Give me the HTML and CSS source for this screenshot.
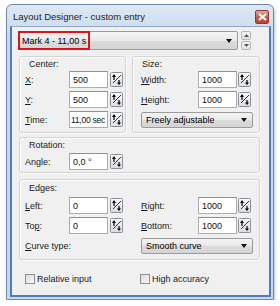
FILE: index.html
```html
<!DOCTYPE html>
<html lang="en">
<head>
    <meta charset="UTF-8">
    <title>Layout Designer - custom entry</title>
    <link rel="stylesheet" href="styles.css">
</head>
<body>
    <div class="window">
        <div class="titlebar">
            <span class="title">Layout Designer - custom entry</span>
            <button class="close">
                <svg width="9" height="8" viewBox="0 0 9 8"><path d="M1 1 L8 7 M8 1 L1 7" stroke="#fff" stroke-width="2"/></svg>
            </button>
        </div>
        <div class="client">
            <div class="toprow">
                <div class="combo entry">
                    <span class="combo-text">Mark 4 - 11,00 s</span>
                    <span class="highlight"></span>
                    <span class="arrow"></span>
                </div>
                <div class="updown">
                    <span class="ud-btn"><svg width="5" height="3" viewBox="0 0 5 3"><path d="M0 3 L2.5 0 L5 3Z" fill="#555"/></svg></span>
                    <span class="ud-btn"><svg width="5" height="3" viewBox="0 0 5 3"><path d="M0 0 L2.5 3 L5 0Z" fill="#555"/></svg></span>
                </div>
            </div>

            <div class="pair">
                <div class="group center">
                    <div class="group-title">Center:</div>
                    <div class="fields left-fields">
                        <label><u>X</u>:</label><input class="field" value="500"><span class="spin"></span>
                        <label><u>Y</u>:</label><input class="field" value="500"><span class="spin"></span>
                        <label><u>T</u>ime:</label><input class="field tight" value="11,00 sec"><span class="spin"></span>
                    </div>
                </div>
                <div class="group size">
                    <div class="group-title">Size:</div>
                    <div class="fields right-fields">
                        <label><u>W</u>idth:</label><input class="field" value="1000"><span class="spin"></span>
                        <label><u>H</u>eight:</label><input class="field" value="1000"><span class="spin"></span>
                        <div class="combo wide"><span class="combo-text">Freely adjustable</span><span class="arrow"></span></div>
                    </div>
                </div>
            </div>

            <div class="group rotation">
                <div class="group-title">Rotation:</div>
                <div class="fields left-fields">
                    <label>Angle:</label><input class="field" value="0,0 °"><span class="spin"></span>
                </div>
            </div>

            <div class="group edges">
                <div class="group-title">Edges:</div>
                <div class="halves">
                    <div class="fields left-fields">
                        <label><u>L</u>eft:</label><input class="field" value="0"><span class="spin"></span>
                        <label>To<u>p</u>:</label><input class="field" value="0"><span class="spin"></span>
                        <label class="span-3"><u>C</u>urve type:</label>
                    </div>
                    <div class="fields right-fields">
                        <label><u>R</u>ight:</label><input class="field" value="1000"><span class="spin"></span>
                        <label><u>B</u>ottom:</label><input class="field" value="1000"><span class="spin"></span>
                        <div class="combo wide"><span class="combo-text">Smooth curve</span><span class="arrow"></span></div>
                    </div>
                </div>
            </div>

            <div class="checks">
                <label class="check"><span class="box"></span>Relative input</label>
                <label class="check"><span class="box"></span>High accuracy</label>
            </div>
        </div>
    </div>

    <script>
        // same spin icon for every numeric field
        const spinIcon = '<svg width="13" height="15" viewBox="0 0 13 15">' +
            '<defs><linearGradient id="g" x1="0" y1="0" x2="0" y2="1"><stop offset="0" stop-color="#fbfbfb"/><stop offset="1" stop-color="#dcdcdc"/></linearGradient></defs>' +
            '<rect x="0.5" y="0.5" width="12" height="14" rx="1" fill="url(#g)" stroke="#8a9099"/>' +
            '<path d="M3 11 L11 3" stroke="#333" stroke-width="1"/>' +
            '<path d="M4 3 V8" stroke="#000" stroke-width="1.2"/><path d="M2 5 L4 2 L6 5Z" fill="#000"/>' +
            '<path d="M9 8 V12" stroke="#000" stroke-width="1.2"/><path d="M7 10.5 L9 13 L11 10.5Z" fill="#000"/>' +
            '</svg>';
        document.querySelectorAll('.spin').forEach(el => el.innerHTML = spinIcon);
    </script>
</body>
</html>
```

FILE: styles.css
```css
* {
    box-sizing: border-box;
    margin: 0;
    padding: 0;
}

body {
    background: #fff;
    font-family: "Liberation Sans", Arial, sans-serif;
    font-size: 9px;
    color: #000;
    padding: 4px 0 0 6px;
}

.window {
    width: 268px;
    height: 296px;
    border: 1px solid #6f8aa8;
    border-radius: 6px 6px 0 0;
    background: linear-gradient(#dde8f5, #c9daee 30px, #c6d8ee);
    display: flex;
    flex-direction: column;
    box-shadow: 1px 2px 3px rgba(0,0,0,0.25);
}

.titlebar {
    height: 21px;
    display: flex;
    align-items: center;
    justify-content: space-between;
    padding: 0 4px 0 6px;
}

.title {
    font-size: 9.5px;
    color: #1e1e1e;
    padding-top: 1px;
}

.close {
    width: 14px;
    height: 14px;
    border: 1px solid #8c3b30;
    border-radius: 2px;
    background: linear-gradient(#e7a597, #c9614f 50%, #b7412f);
    display: flex;
    align-items: center;
    justify-content: center;
    margin-top: 3px;
}

.client {
    flex: 1;
    margin: 0 2px 2px 3px;
    border: 2px solid #4d7dbb;
    border-top: 1px solid #8fa7c4;
    background: #f0f0f0;
    padding: 4px 9px 0 7px;
}

.toprow {
    display: flex;
    align-items: center;
    gap: 3px;
    margin-left: -1px;
}

.combo {
    position: relative;
    height: 16px;
    border: 1px solid #9b9b9b;
    border-radius: 2px;
    background: linear-gradient(#f4f4f4, #e9e9e9 50%, #dcdcdc 51%, #d4d4d4);
    display: flex;
    align-items: center;
    padding-left: 4px;
}

.combo.entry {
    width: 220px;
    height: 19px;
    padding-left: 3px;
}

.combo .arrow {
    position: absolute;
    right: 5px;
    top: 50%;
    margin-top: -2px;
    border-left: 3px solid transparent;
    border-right: 3px solid transparent;
    border-top: 4px solid #111;
}

.highlight {
    position: absolute;
    left: -1px;
    top: -1px;
    width: 72px;
    height: 19px;
    border: 2px solid #e3121a;
}

.updown {
    display: flex;
    flex-direction: column;
    gap: 1px;
}

.ud-btn {
    width: 10px;
    height: 9px;
    border: 1px solid #b5b5b5;
    border-radius: 2px;
    background: linear-gradient(#f6f6f6, #e2e2e2);
    display: flex;
    align-items: center;
    justify-content: center;
}

.group {
    border: 1px solid #d3d3d3;
    border-radius: 3px;
    box-shadow: inset 1px 1px 0 #fff, 1px 1px 0 #fff;
}

.group-title {
    height: 12px;
    line-height: 12px;
    padding-left: 4px;
    margin-top: 1px;
    color: #1a1a1a;
}

.pair {
    display: flex;
    gap: 6px;
    margin-top: 6px;
}

.center {
    width: 107px;
    height: 77px;
    padding-left: 5px;
}

.size {
    flex: 1;
    height: 77px;
    padding-left: 8px;
}

.size .group-title {
    padding-left: 1px;
}

.fields {
    display: grid;
    row-gap: 3px;
    align-items: center;
    margin-top: 1px;
}

.left-fields {
    grid-template-columns: 42px 39px 13px;
    column-gap: 2px;
    grid-auto-rows: 17px;
}

.right-fields {
    grid-template-columns: 56px 39px 13px;
    column-gap: 1px;
    grid-auto-rows: 17px;
}

.fields label {
    color: #1a1a1a;
}

.span-3 {
    grid-column: span 3;
}

.field {
    height: 17px;
    width: 100%;
    border: 1px solid #abadb3;
    border-top-color: #8e9196;
    background: #fff;
    font: inherit;
    font-size: 9px;
    padding-left: 3px;
    color: #111;
}

.field.tight {
    padding-left: 1px;
    letter-spacing: -0.3px;
    font-size: 8.6px;
}

.spin {
    display: flex;
    width: 13px;
    height: 15px;
}

.combo.wide {
    grid-column: span 3;
    width: 112px;
    height: 16px;
}

.rotation {
    height: 36px;
    margin-top: 4px;
    padding-left: 5px;
}

.rotation .fields {
    margin-top: 2px;
}

.rotation .group-title {
    padding-left: 4px;
}

.edges {
    height: 81px;
    margin-top: 6px;
    padding-left: 5px;
}

.edges .group-title {
    margin-top: 2px;
}

.halves {
    display: flex;
    margin-top: 2px;
}

.halves .left-fields {
    width: 116px;
}

.checks {
    display: flex;
    margin-top: 14px;
    padding-left: 6px;
}

.check {
    display: flex;
    align-items: center;
    gap: 2px;
    color: #1a1a1a;
}

.check:first-child {
    width: 115px;
}

.box {
    width: 10px;
    height: 10px;
    border: 1px solid #8f8f8f;
    background: linear-gradient(135deg, #dcdcdc, #f8f8f8);
}
```
